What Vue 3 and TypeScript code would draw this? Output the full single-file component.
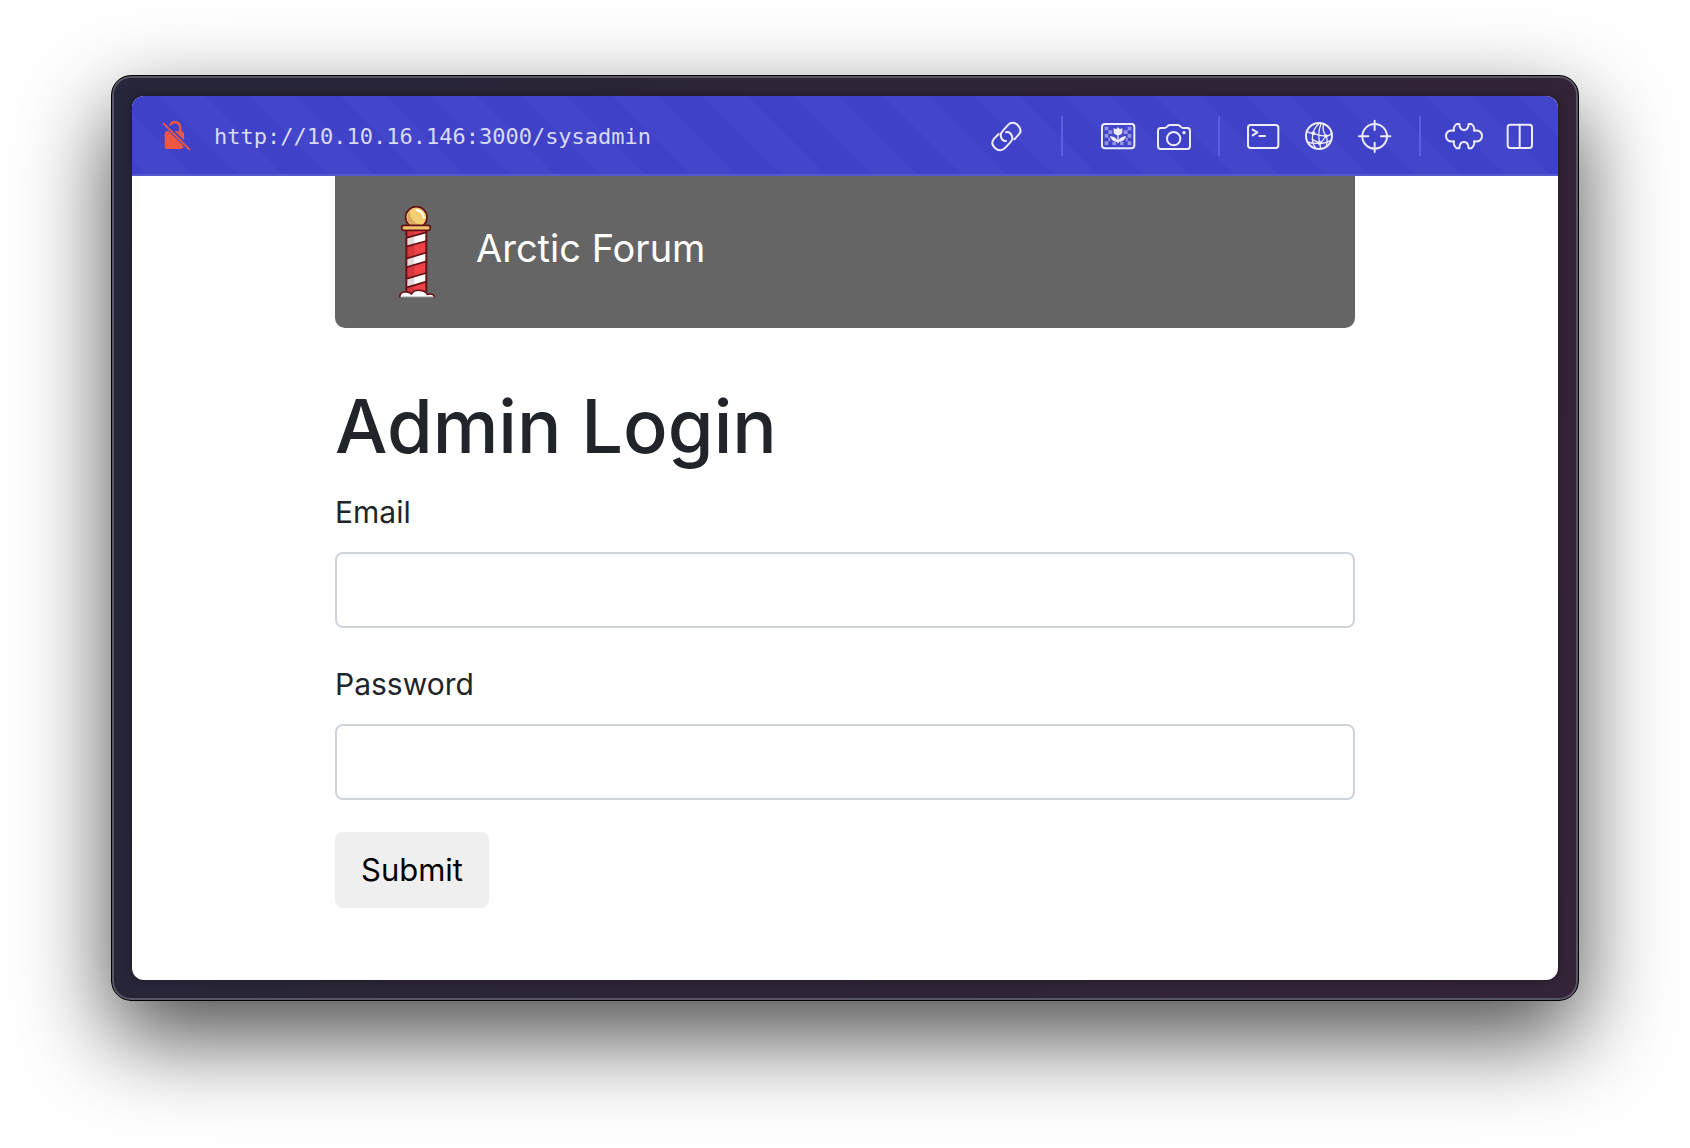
<script setup lang="ts">
import { ref } from 'vue'

const address = ref('http://10.10.16.146:3000/sysadmin')
const email = ref('')
const password = ref('')
</script>

<template>
  <div class="desktop">
    <div class="window">
      <div class="browser">
        <header class="toolbar">
          <svg class="icon lock" viewBox="168 168 120 120" aria-hidden="true">
            <path d="M199 214 H206 L251 259 Q250 267 243 267 H203 Q194 267 194 259 V221 Q194 216 199 214 Z" fill="#ee5743" />
            <path d="M210 196 Q215 186 224 186 Q241 187 241 205 V216" fill="none" stroke="#ee5743" stroke-width="7" />
            <path d="M224 214 H244 Q252 215 252 222 V241 Z" fill="#ee5743" />
            <path d="M191 191 L268 268" stroke="#ee5743" stroke-width="6" stroke-linecap="round" />
          </svg>
          <input v-model="address" class="address" type="text" aria-label="Address" spellcheck="false" />

          <nav class="tools" aria-label="Browser tools">
            <button class="tool" type="button" aria-label="Copy link">
              <svg class="icon" viewBox="48 48 120 120">
                <g class="line">
                  <path d="M98 120 C88 108 91 100 99 92 L113 76 C121 66 134 66 143 75 C153 85 154 96 146 104 L133 118" />
                  <path d="M120 99 C130 110 129 119 121 127 L106 143 C97 153 85 154 75 144 C65 134 65 123 73 115 L86 102" />
                  <path d="M98 120 Q102 124 108 123 M120 99 Q115 95 108 97" />
                </g>
              </svg>
            </button>
            <span class="divider wide"></span>
            <div class="group">
              <button class="tool" type="button" aria-label="Images">
                <svg class="icon" viewBox="384 48 120 120">
                  <g fill="#9293e2">
                    <path d="M404 80h11v11h-11z M473 80h11v11h-11z M415 91h12v11h-12z M461 91h12v11h-12z M404 102h11v11h-11z M473 102h11v11h-11z M415 113h6v11h-6z M467 113h6v11h-6z M404 124h11v11h-11z M427 126h11v9h-11z M450 126h11v9h-11z M473 124h11v11h-11z" />
                  </g>
                  <rect class="line" x="396" y="72" width="97" height="73" rx="9" />
                  <path d="M431 84 L438 88 L444 82 L450 88 L457 84 V96 Q456 104 446 106 V120 Q452 110 468 108 Q465 125 446 126 V130 H442 V126 Q423 125 420 108 Q436 110 442 120 V106 Q432 104 431 96 Z" fill="#ececfb" />
                </svg>
              </button>
              <button class="tool" type="button" aria-label="Capture">
                <svg class="icon" viewBox="552 48 120 120">
                  <path class="line" d="M572 84 H584 Q589 84 592 79 Q595 75 600 75 H623 Q628 75 631 79 Q634 84 639 84 H652 Q660 84 660 93 V138 Q660 147 652 147 H572 Q564 147 564 138 V93 Q564 84 572 84 Z" />
                  <circle class="line" cx="611" cy="116" r="20" />
                  <circle cx="642" cy="98" r="5" fill="#ececfb" />
                </svg>
              </button>
            </div>
            <span class="divider"></span>
            <div class="group">
              <button class="tool" type="button" aria-label="Console">
                <svg class="icon" viewBox="69 48 120 120">
                  <rect class="line" x="84" y="75" width="91" height="69" rx="8" />
                  <path class="line" d="M98 89 L112 97 L98 106 M118 108 H135" />
                </svg>
              </button>
              <button class="tool" type="button" aria-label="Network">
                <svg class="icon" viewBox="237 48 120 120">
                  <circle class="line" cx="297" cy="108" r="39" />
                  <g class="line thin">
                    <path d="M299 69 Q276 88 277 118 Q278 134 288 146" />
                    <path d="M304 70 Q292 96 299 129 L302 147" />
                    <path d="M311 72 Q305 92 318 108 Q324 118 319 140" />
                    <path d="M318 108 Q308 124 299 129 Q285 124 277 118" />
                    <path d="M260 93 Q270 101 280 100 Q298 108 318 108 Q330 108 336 98" />
                    <path d="M262 126 Q280 132 299 129 Q316 132 331 122" />
                  </g>
                  <g fill="#ececfb">
                    <circle cx="280" cy="100" r="6" />
                    <circle cx="318" cy="108" r="5" />
                    <circle cx="299" cy="129" r="6" />
                  </g>
                </svg>
              </button>
              <button class="tool" type="button" aria-label="Inspect">
                <svg class="icon" viewBox="405 48 120 120">
                  <circle class="line" cx="464" cy="109" r="37" />
                  <path class="line" d="M464 62 V90 M464 128 V156 M417 109 H445 M483 109 H511" />
                </svg>
              </button>
            </div>
            <span class="divider"></span>
            <div class="group">
              <button class="tool" type="button" aria-label="Extensions">
                <svg class="icon" viewBox="102 138 120 120">
                  <path class="line" d="M132 182 Q129 170 140 162 H148 Q149 180 162 180 Q175 180 176 162 H184 Q195 170 192 182 Q216 180 216 198 Q216 216 192 214 Q195 226 184 235 H176 Q175 216 162 216 Q149 216 148 235 H140 Q129 226 132 214 Q108 216 108 198 Q108 180 132 182 Z" />
                </svg>
              </button>
              <button class="tool" type="button" aria-label="Split view">
                <svg class="icon" viewBox="270 138 120 120">
                  <rect class="line" x="293" y="164" width="73" height="70" rx="8" />
                  <path class="line" d="M329 164 V234" />
                </svg>
              </button>
            </div>
          </nav>
        </header>

        <main class="page">
          <div class="container">
            <div class="banner">
              <svg class="pole" viewBox="0 -12 195 342" aria-hidden="true">
                <rect x="64" y="100" width="61" height="192" fill="#ee4246" />
                <path d="M66 128 L124 112 V138 L66 154 Z M66 190 L124 173 V199 L66 216 Z M66 251 L124 234 V260 L66 277 Z" fill="#fff" />
                <rect x="66" y="100" width="22" height="190" fill="#5a0f16" opacity=".16" />
                <path d="M66 128 L124 112 M66 154 L124 138 M66 190 L124 173 M66 216 L124 199 M66 251 L124 234 M66 277 L124 260" stroke="#651216" stroke-width="5" />
                <path d="M64 104 V290 M124 104 V290" stroke="#651216" stroke-width="6" />
                <circle cx="94" cy="67" r="32" fill="#f4cf72" stroke="#651216" stroke-width="5" />
                <path d="M73 47 Q60 72 77 90 Q92 98 112 90 Q78 86 73 47 Z" fill="#d9a962" />
                <path d="M95 45 Q112 48 117 68" fill="none" stroke="#fff" stroke-width="6" stroke-linecap="round" />
                <rect x="50" y="91" width="86" height="15" rx="7" fill="#efc16a" stroke="#651216" stroke-width="5" />
                <path d="M44 306 Q45 290 61 291 Q68 288 79 295 Q86 284 104 286 Q121 287 126 298 Q147 294 149 306 Z" fill="#fff" />
                <path d="M50 305 H146" stroke="#c9cccd" stroke-width="4" />
                <path d="M44 307 Q45 290 61 291 Q71 289 79 297 Q87 284 104 286 Q121 287 127 298 Q147 294 149 307" fill="none" stroke="#651216" stroke-width="5" />
              </svg>
              <span class="brand">Arctic Forum</span>
            </div>

            <h1>Admin Login</h1>
            <form @submit.prevent>
              <div class="field">
                <label for="email">Email</label>
                <input id="email" v-model="email" type="email" />
              </div>
              <div class="field">
                <label for="password">Password</label>
                <input id="password" v-model="password" type="password" />
              </div>
              <button class="submit" type="submit">Submit</button>
            </form>
          </div>
        </main>
      </div>
    </div>
  </div>
</template>

<style>
body {
  margin: 0;
  background: #fff;
}
</style>

<style scoped>
* {
  box-sizing: border-box;
}

.desktop {
  padding: 75px 111px 146px;
  overflow: hidden;
  font-family: Inter, "Liberation Sans", sans-serif;
  color: #212529;
}

.window {
  padding: 20px;
  border: 1px solid #000;
  border-radius: 20px;
  background: linear-gradient(100deg, #252639 0%, #2c2437 35%, #332437 100%);
  box-shadow: inset 0 0 0 2px #5a5566, 0 36px 90px rgba(0, 0, 0, 0.7);
}

.browser {
  border-radius: 12px;
  overflow: hidden;
  background: #fff;
  box-shadow: 0 0 8px rgba(0, 0, 0, 0.3);
}

.toolbar {
  display: flex;
  align-items: center;
  height: 80px;
  padding: 0 18px 0 24px;
  background: repeating-linear-gradient(45deg, #3f41c8 0 12px, #4346cb 12px 44px, #3f41c8 44px 64px);
  box-shadow: inset 0 -2px 0 #5557ce;
}

.icon {
  display: block;
  width: 40px;
  height: 40px;
}

.lock {
  flex: none;
}

.address {
  flex: 1;
  min-width: 0;
  margin-left: 18px;
  padding: 2px 0 0;
  border: 0;
  outline: 0;
  background: transparent;
  color: #d9daf7;
  font: 22px/32px "DejaVu Sans Mono", "Liberation Mono", monospace;
}

.tools,
.group {
  display: flex;
  align-items: center;
}

.group {
  gap: 16px;
}

.tool {
  padding: 0;
  border: 0;
  background: transparent;
}

.line {
  fill: none;
  stroke: #ececfb;
  stroke-width: 6;
  stroke-linecap: round;
  stroke-linejoin: round;
}

.thin {
  stroke-width: 4;
}

.divider {
  width: 2px;
  height: 40px;
  margin: 0 23px 0 24px;
  background: #5d5fe0;
}

.divider.wide {
  margin: 0 35px;
}

.page {
  padding: 0 24px 72px;
}

.container {
  max-width: 1020px;
  margin: 0 auto;
}

.banner {
  display: flex;
  align-items: center;
  gap: 26px;
  height: 152px;
  padding: 0 50px 8px;
  border-radius: 0 0 10px 10px;
  background: #656565;
  color: #fff;
}

.pole {
  width: 65px;
  height: 114px;
}

.brand {
  font-size: 38px;
  line-height: 48px;
}

h1 {
  margin: 50px 0 14px;
  font-size: 74px;
  font-weight: 500;
  line-height: 96px;
}

.field {
  margin-bottom: 32px;
}

label {
  display: block;
  margin-bottom: 16px;
  font-size: 30px;
  line-height: 48px;
}

.field input {
  display: block;
  width: 100%;
  height: 76px;
  padding: 12px 24px;
  border: 2px solid #ced4da;
  border-radius: 8px;
  outline: 0;
  background: #fff;
  color: inherit;
  font: 30px/48px Inter, "Liberation Sans", sans-serif;
}

.submit {
  display: block;
  height: 76px;
  padding: 12px 24px;
  border: 2px solid #efefef;
  border-radius: 8px;
  background: #efefef;
  color: #000;
  font: 31px/48px Inter, "Liberation Sans", sans-serif;
}
</style>
